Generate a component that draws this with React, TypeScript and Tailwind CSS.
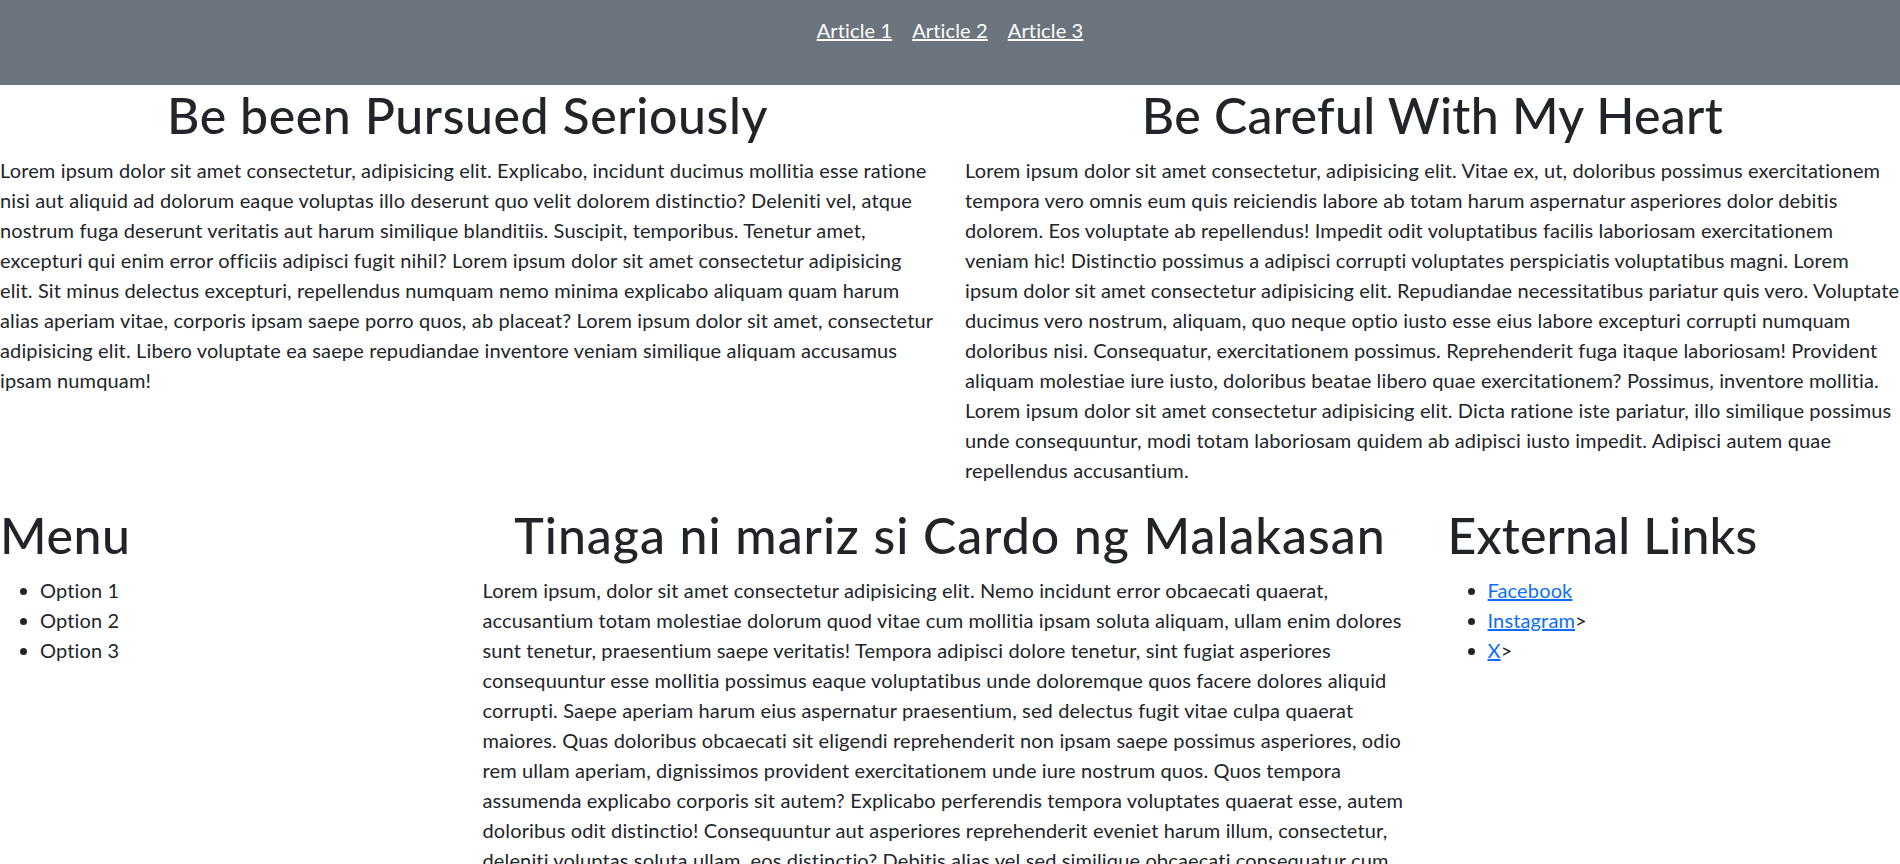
export default function App() {
  return (
    <div className="min-h-screen bg-white font-['Lato',sans-serif] text-[20px] leading-[30px] tracking-[0.14px] text-[#212529]">
      {/* top nav */}
      <nav className="flex h-[85px] justify-center bg-[#6c757d] pt-[15px]">
        <a href="#a1" className="mx-[10px] h-fit text-white underline">
          Article 1
        </a>
        <a href="#a2" className="mx-[10px] h-fit text-white underline">
          Article 2
        </a>
        <a href="#a3" className="mx-[10px] h-fit text-white underline">
          Article 3
        </a>
      </nav>

      <main className="grid grid-cols-4 gap-x-[30px]">
        <article id="a1" className="col-span-2">
          <h1 className="mb-[10px] text-center text-[50px] font-medium leading-[60px] tracking-[0.6px]">
            Be been Pursued Seriously
          </h1>
          <p className="mb-[20px]">
            Lorem ipsum dolor sit amet consectetur, adipisicing elit. Explicabo, incidunt ducimus mollitia esse ratione
            nisi aut aliquid ad dolorum eaque voluptas illo deserunt quo velit dolorem distinctio? Deleniti vel, atque
            nostrum fuga deserunt veritatis aut harum similique blanditiis. Suscipit, temporibus. Tenetur amet,
            excepturi qui enim error officiis adipisci fugit nihil? Lorem ipsum dolor sit amet consectetur adipisicing
            elit. Sit minus delectus excepturi, repellendus numquam nemo minima explicabo aliquam quam harum alias
            aperiam vitae, corporis ipsam saepe porro quos, ab placeat? Lorem ipsum dolor sit amet, consectetur
            adipisicing elit. Libero voluptate ea saepe repudiandae inventore veniam similique aliquam accusamus ipsam
            numquam!
          </p>
        </article>

        <article id="a2" className="col-span-2">
          <h1 className="mb-[10px] text-center text-[50px] font-medium leading-[60px] tracking-[0.3px]">
            Be Careful With My Heart
          </h1>
          <p className="mb-[20px]">
            Lorem ipsum dolor sit amet consectetur, adipisicing elit. Vitae ex, ut, doloribus possimus exercitationem
            tempora vero omnis eum quis reiciendis labore ab totam harum aspernatur asperiores dolor debitis dolorem.
            Eos voluptate ab repellendus! Impedit odit voluptatibus facilis laboriosam exercitationem veniam hic!
            Distinctio possimus a adipisci corrupti voluptates perspiciatis voluptatibus magni. Lorem ipsum dolor sit
            amet consectetur adipisicing elit. Repudiandae necessitatibus pariatur quis vero. Voluptate ducimus vero
            nostrum, aliquam, quo neque optio iusto esse eius labore excepturi corrupti numquam doloribus nisi.
            Consequatur, exercitationem possimus. Reprehenderit fuga itaque laboriosam! Provident aliquam molestiae
            iure iusto, doloribus beatae libero quae exercitationem? Possimus, inventore mollitia. Lorem ipsum dolor
            sit amet consectetur adipisicing elit. Dicta ratione iste pariatur, illo similique possimus unde
            consequuntur, modi totam laboriosam quidem ab adipisci iusto impedit. Adipisci autem quae repellendus
            accusantium.
          </p>
        </article>

        <aside>
          <h1 className="mb-[10px] text-[50px] font-medium leading-[60px] tracking-[0.6px]">Menu</h1>
          <ul className="mb-[20px] list-disc pl-[40px]">
            <li>Option 1</li>
            <li>Option 2</li>
            <li>Option 3</li>
          </ul>
        </aside>

        <article id="a3" className="col-span-2">
          <h1 className="mb-[10px] text-center text-[50px] font-medium leading-[60px] tracking-[1px]">
            Tinaga ni mariz si Cardo ng Malakasan
          </h1>
          <p className="mb-[20px]">
            Lorem ipsum, dolor sit amet consectetur adipisicing elit. Nemo incidunt error obcaecati quaerat,
            accusantium totam molestiae dolorum quod vitae cum mollitia ipsam soluta aliquam, ullam enim dolores sunt
            tenetur, praesentium saepe veritatis! Tempora adipisci dolore tenetur, sint fugiat asperiores consequuntur
            esse mollitia possimus eaque voluptatibus unde doloremque quos facere dolores aliquid corrupti. Saepe
            aperiam harum eius aspernatur praesentium, sed delectus fugit vitae culpa quaerat maiores. Quas doloribus
            obcaecati sit eligendi reprehenderit non ipsam saepe possimus asperiores, odio rem ullam aperiam,
            dignissimos provident exercitationem unde iure nostrum quos. Quos tempora assumenda explicabo corporis sit
            autem? Explicabo perferendis tempora voluptates quaerat esse, autem doloribus odit distinctio! Consequuntur
            aut asperiores reprehenderit eveniet harum illum, consectetur, deleniti voluptas soluta ullam, eos
            distinctio? Debitis alias vel sed similique obcaecati consequatur cum.
          </p>
        </article>

        <aside>
          <h1 className="mb-[10px] text-[50px] font-medium leading-[60px] tracking-[0.15px]">External Links</h1>
          <ul className="mb-[20px] list-disc pl-[40px]">
            <li>
              <a href="#" className="text-[#0d6efd] underline">
                Facebook
              </a>
            </li>
            <li>
              <a href="#" className="text-[#0d6efd] underline">
                Instagram
              </a>
              &gt;
            </li>
            <li>
              <a href="#" className="text-[#0d6efd] underline">
                X
              </a>
              &gt;
            </li>
          </ul>
        </aside>
      </main>
    </div>
  )
}
